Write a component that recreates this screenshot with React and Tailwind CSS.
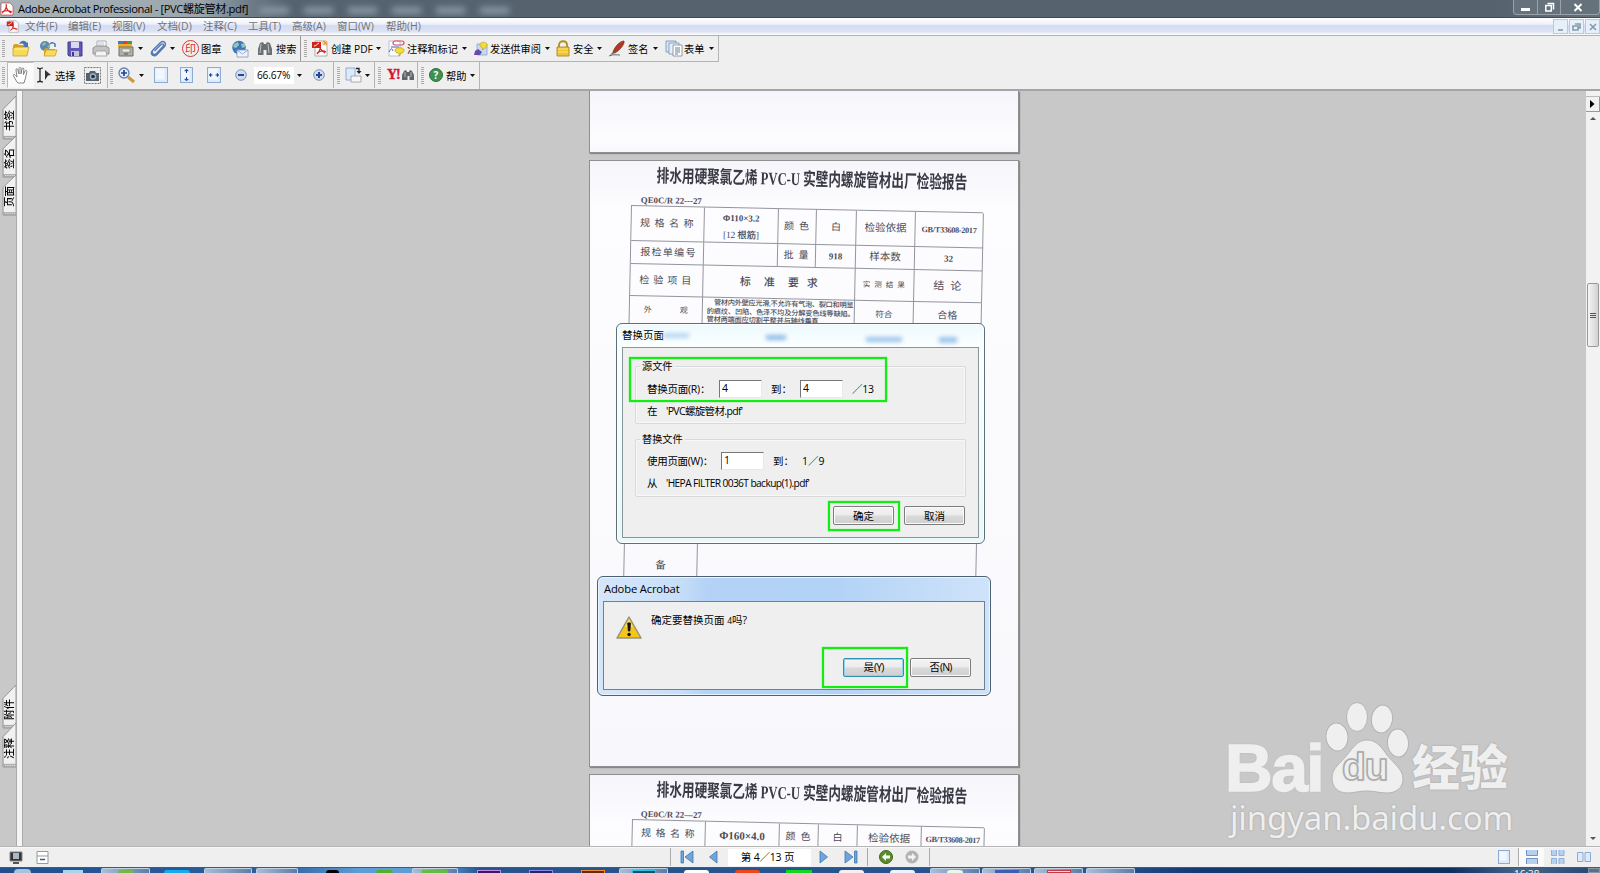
import React from 'react';

const UI = "font-['Open_Sans','Noto_Sans_CJK_SC',sans-serif]";

/* ---------- small building blocks ---------- */

const Svg = ({ w = 16, h = 16, children }) => (
    <svg width={w} height={h} viewBox={`0 0 ${w} ${h}`} className="shrink-0 overflow-visible">
        {children}
    </svg>
);

const Slot = ({ className, children }) => (
    <div className={`flex h-full shrink-0 items-center whitespace-nowrap ${className}`}>{children}</div>
);

const Grip = ({ className }) => (
    <Slot className={className}>
        <div className="h-[17px] w-[3px] bg-[repeating-linear-gradient(to_bottom,#aaa_0_1px,transparent_1px_2px)]"></div>
    </Slot>
);

const Caret = ({ className }) => (
    <Slot className={className}>
        <Svg w={5} h={3}><path d="M0 0h5L2.5 3z" fill="#111" /></Svg>
    </Slot>
);

/* ---------- toolbar icons ---------- */

const OpenIcon = () => (
    <Svg w={18} h={17}>
        <path d="M1 6l1-2h4l1 1h6v3H1z" fill="#d9a51f" />
        <path d="M1 16V8l3-1h13l-2 9z" fill="#f7da55" stroke="#c3951f" strokeWidth=".7" />
        <path d="M3 9h12" stroke="#fff3a8" />
        <path d="M7 4c2-4 6-4 8-1l1-1v5h-5l1.500-1.500C11 3 9 3 7 4z" fill="#4a76ad" />
    </Svg>
);

const WebFolderIcon = () => (
    <Svg w={18} h={17}>
        <circle cx="6" cy="6" r="5" fill="#5b87c0" />
        <path d="M3 4l3-2 1 2-3 2zM8 6l3-1-1 3z" fill="#8ecb7a" />
        <path d="M5 9l3-1 2 1h6v7H5z" fill="#d9a51f" />
        <path d="M5 16l2-6h11l-2 6z" fill="#f9dd59" stroke="#c3951f" strokeWidth=".7" />
        <path d="M11 4c2-2 4-1 5 0v3" stroke="#4a76ad" strokeWidth="1.500" fill="none" />
    </Svg>
);

const SaveIcon = () => (
    <Svg w={16} h={16}>
        <path d="M1 1h14v14H2l-1-1z" fill="#6058b8" stroke="#403a8c" />
        <path d="M4 1h8v6H4z" fill="#d8d8f0" />
        <path d="M4 10h8v5H4z" fill="#c4c4d4" />
        <path d="M5 11h2v4H5z" fill="#403a8c" />
    </Svg>
);

const PrintIcon = () => (
    <Svg w={18} h={17}>
        <path d="M5 1h9v8H5z" fill="#fff" stroke="#999" strokeWidth=".8" />
        <path d="M6 3h6M6 5h6" stroke="#b5c4dc" />
        <path d="M1 8l3-2h10l3 2v6H1z" fill="#c3c3c3" stroke="#858585" strokeWidth=".8" />
        <path d="M4 11h10l1 5H3z" fill="#f4f4f4" stroke="#999" strokeWidth=".8" />
    </Svg>
);

const OrganizerIcon = () => (
    <Svg w={18} h={17}>
        <path d="M1 1h5v3H1z" fill="#377fd0" />
        <path d="M6 1h4v3H6z" fill="#e43c2c" />
        <path d="M10 1h5v3h-5z" fill="#33a345" />
        <path d="M1 4h14v3H1z" fill="#f1ac28" />
        <path d="M2 7h14v9H2z" fill="#b0b0a8" stroke="#70706a" />
        <path d="M5 9h8v3H5z" fill="#f2f2ec" stroke="#777" strokeWidth=".6" />
        <path d="M7 14h4" stroke="#555" />
    </Svg>
);

const ClipIcon = () => (
    <Svg w={18} h={18}>
        <path d="M4.500 11L11 4.500c1.500-1.500 3.500.3 2 2L6.500 13.500c-2.500 2.500-6-.5-3.500-3.500L10.500 2.500c3-2.500 6.500.5 4 4L7 14.500c-3 3-7 0-5-3.500" fill="none" stroke="#5479b2" strokeWidth="1.400" />
    </Svg>
);

const StampIcon = () => (
    <div className="flex size-[17px] items-center justify-center rounded-full border border-[#e03030] text-[11px] leading-none text-[#e03030]">印</div>
);

const MailGlobeIcon = () => (
    <Svg w={18} h={18}>
        <circle cx="8" cy="7.500" r="6.800" fill="#3f76b4" />
        <path d="M3 4l4-2 1 3-3 3-3-1zM10 4l4-1v4l-3 1z" fill="#8fc5c0" />
        <path d="M6 10h11v7H6z" fill="#eef4fc" stroke="#7e98bf" strokeWidth=".8" />
        <path d="M6 10l5.500 4 5.500-4" fill="none" stroke="#7e98bf" strokeWidth=".8" />
    </Svg>
);

const BinocIcon = () => (
    <Svg w={16} h={16}>
        <path d="M3 2l3-1 1 2h2l1-2 3 1 2 6v6H9.500V9h-3v5H1V8z" fill="#6b6f73" />
        <path d="M4 3L3 12M11 3l1 9" stroke="#c2c6ca" />
    </Svg>
);

const PdfIcon = ({ s = 17, star }) => (
    <svg width={s} height={s} viewBox="0 0 17 17" className="shrink-0">
        <path d="M4 1h9l3 3v12H4z" fill="#fff" stroke="#999" strokeWidth=".8" />
        <path d="M1 2h9v6H1z" fill="#d3241c" />
        <path d="M6 14c3-3 4-7 3-9M6 13c3-2 6-3 9-1M9 8c1 2 3 4 5 5" stroke="#d3241c" fill="none" strokeWidth="1.200" />
        <path d="M3 6c2 0 3-2 5-3" stroke="#fff" fill="none" />
        {star && <path d="M14 0v6M11 3h6M12 1l4 4M16 1l-4 4" stroke="#f39a2c" strokeWidth="1" />}
    </svg>
);

const CommentIcon = () => (
    <Svg w={18} h={17}>
        <path d="M1 1h11v15H1z" fill="#fafcff" stroke="#9bb0d0" strokeWidth=".7" />
        <rect x="5" y="1" width="11" height="4" rx="2" fill="none" stroke="#e04858" strokeWidth="1.200" />
        <path d="M1 12c2-4 3-4 4-1M3 7h8" stroke="#3f65b5" fill="none" />
        <path d="M7 10c0-3 9-3 9 0 0 3-2 3-3 3l-2 3v-3c-3 0-4-1-4-3z" fill="#f5dc35" stroke="#b79a19" strokeWidth=".7" />
    </Svg>
);

const ReviewIcon = () => (
    <Svg w={15} h={16}>
        <path d="M3 3h10v11H3z" fill="#c5d9f2" stroke="#7f9dc8" strokeWidth=".7" />
        <path d="M6 3.500c0-3 7-3 7 0S11.500 7 10.500 7L8.500 9V7C6.500 6 6 5 6 3.500z" fill="#f3dc33" stroke="#b79a19" strokeWidth=".6" />
        <path d="M0 14l1-4 3-2 4 3-2 3z" fill="#6a4bab" />
    </Svg>
);

const LockIcon = () => (
    <Svg w={14} h={17}>
        <path d="M3 8V5c0-5 8-5 8 0v3" fill="none" stroke="#b28d24" strokeWidth="1.800" />
        <path d="M1 7h12v9H1z" fill="#f1c52e" stroke="#a87f14" strokeWidth=".8" />
        <path d="M2 9h10M2 12h10" stroke="#fbe489" />
    </Svg>
);

const PenIcon = () => (
    <Svg w={17} h={17}>
        <path d="M4 12C6 6 11 1 15 1c1 3-4 9-9 12z" fill="#b23a1e" stroke="#6f1c0c" strokeWidth=".6" />
        <path d="M1 15l3-3 2 1z" fill="#555" />
        <path d="M0 16c4-2 8-1 11-1" stroke="#444" fill="none" strokeWidth=".8" />
    </Svg>
);

const FormIcon = () => (
    <Svg w={18} h={17}>
        <path d="M1 1h10v11H1z" fill="#d6e4f6" stroke="#7290b8" strokeWidth=".8" />
        <path d="M4 3h10v11H4z" fill="#e6effa" stroke="#7290b8" strokeWidth=".8" />
        <path d="M8 5h9v11H8z" fill="#fff" stroke="#7b8694" strokeWidth=".8" />
        <path d="M10 8h5M10 10h5M10 12h5M10 14h3" stroke="#5f6d7c" strokeWidth=".9" />
    </Svg>
);

const HandIcon = () => (
    <Svg w={17} h={18}>
        <path d="M5 16L1.500 10c-.8-1.500 1-2 1.800-.8L5 11 4 4c-.2-1.600 1.500-1.700 1.800-.2L7 8V2.500C7 1 9 1 9 2.500V8l1-5c.3-1.500 2-1.200 1.800.3L11.500 8.500 13 5c.6-1.300 2.200-.7 1.800.8L13.500 12 12 17H6z" fill="#fff" stroke="#777" strokeWidth=".9" />
    </Svg>
);

const SelectIcon = () => (
    <Svg w={15} h={16}>
        <path d="M0 1c2 0 2 0 3 1 1-1 1-1 3-1M3 2v12M0 15c2 0 2 0 3-1 1 1 1 1 3 1" stroke="#222" fill="none" strokeWidth="1.200" />
        <path d="M8 3l6 5-3 .5L8 13z" fill="#333" />
    </Svg>
);

const CameraIcon = () => (
    <Svg w={17} h={17}>
        <path d="M.5.5h16v16H.5z" fill="none" stroke="#777" strokeDasharray="2 1" />
        <path d="M2 6h3l1-2h5l1 2h3v8H2z" fill="#55626f" />
        <circle cx="9" cy="9.500" r="3.200" fill="#9fb2c4" />
        <circle cx="9" cy="9.500" r="1.800" fill="#26303a" />
    </Svg>
);

const ZoomIcon = () => (
    <Svg w={17} h={17}>
        <path d="M10 10l6 5" stroke="#c79a3c" strokeWidth="3" />
        <circle cx="6" cy="6" r="5" fill="#e4eefb" stroke="#6482ae" strokeWidth="1.300" />
        <path d="M3 6h6M6 3v6" stroke="#22479a" strokeWidth="1.700" />
    </Svg>
);

const PageIcon = ({ children, w = 13, h = 16 }) => (
    <Svg w={w} h={h}>
        <rect x=".5" y=".5" width={w - 1} height={h - 1} fill="#dcebfb" stroke="#8fabd3" />
        <rect x="1.500" y="1.500" width={w - 5} height={h - 5} fill="#fff" opacity=".6" />
        {children}
    </Svg>
);

const RoundIcon = ({ plus }) => (
    <Svg w={12} h={12}>
        <circle cx="6" cy="6" r="5.300" fill="#cfdcf0" stroke="#7f93b8" />
        <path d={plus ? 'M3 6h6M6 3v6' : 'M3 6h6'} stroke="#24479a" strokeWidth="2" />
    </Svg>
);

const RotateIcon = () => (
    <Svg w={17} h={17}>
        <path d="M1 1h9v12H1z" fill="#dcebfb" stroke="#8fabd3" />
        <path d="M6 9h10v6H6z" fill="#f3f7fc" stroke="#999" strokeWidth=".8" />
        <path d="M11 1.500h3V4" stroke="#222" fill="none" strokeWidth="1.300" />
        <path d="M11.500 4h5L14 7z" fill="#222" />
    </Svg>
);

const HelpIcon = () => (
    <div className="flex size-[14px] items-center justify-center rounded-full border border-[#2f6f3c] bg-[#3f9150] text-[10px] font-bold leading-none text-white">?</div>
);

/* ---------- window chrome ---------- */

const TitleBar = () => (
    <div className="flex h-[18px] shrink-0 items-center overflow-hidden border-b border-[#414b54] bg-[linear-gradient(to_right,#a9b3ba_0,#9ba6ae_200px,#71808b_245px,#56636f_290px,#56636f_1500px,#66717b_100%)]">
        <div className="ml-px flex w-[17px]">
            <Svg w={12} h={14}>
                <path d="M0 1h9l3 3v9H0z" fill="#fff" stroke="#c9262b" strokeWidth=".6" />
                <path d="M1 11c4-3 5-7 4-9M1 10c4-2 7-2 10 0M5 5c1 3 3 5 5 6" stroke="#d3241c" fill="none" strokeWidth="1.200" />
            </Svg>
        </div>
        <div className="w-[242px] whitespace-nowrap text-[11.200px] leading-none tracking-[-.4px] text-black">Adobe Acrobat Professional - [PVC螺旋管材.pdf]</div>
        <div className="flex gap-[15px] pt-[4px] blur-[3px]">
            {[1, 2, 3, 4, 5, 6].map((k) => (
                <div key={k} className="h-[7px] w-[29px] bg-[#8796a5]"></div>
            ))}
        </div>
        <div className="ml-auto flex h-[15px] w-[87px] shrink-0 self-start overflow-hidden rounded-b border border-t-0 border-[#99a2aa] bg-[#65717b] text-white">
            <div className="flex w-[24px] items-center justify-center border-r border-[#99a2aa]">
                <div className="mt-1 h-[3px] w-[9px] bg-white"></div>
            </div>
            <div className="flex w-[23px] items-center justify-center border-r border-[#99a2aa]">
                <Svg w={9} h={9}><path d="M2.500.5h6v6M.8 2.500h5.500v5.500H.8z" stroke="#fff" strokeWidth="1.500" fill="none" /></Svg>
            </div>
            <div className="flex flex-1 items-center justify-center pr-[4px]">
                <Svg w={8} h={7}><path d="M.5 0l7 7M7.500 0l-7 7" stroke="#fff" strokeWidth="2" /></Svg>
            </div>
        </div>
    </div>
);

const MenuBar = () => (
    <div className="flex h-[18px] shrink-0 items-center border-b border-[#aeb2ba] bg-[linear-gradient(to_bottom,#fff_0,#eef1fa_35%,#d6dcf0_45%,#dde3f4_80%,#fff_100%)] text-[10.500px] leading-none text-[#6f7278]">
        <div className="ml-[6px] w-[19px]"><PdfIcon s={13} /></div>
        <Slot className="w-[43px]">文件(F)</Slot>
        <Slot className="w-[44px]">编辑(E)</Slot>
        <Slot className="w-[45px]">视图(V)</Slot>
        <Slot className="w-[46px]">文档(D)</Slot>
        <Slot className="w-[45px]">注释(C)</Slot>
        <Slot className="w-[44px]">工具(T)</Slot>
        <Slot className="w-[45px]">高级(A)</Slot>
        <Slot className="w-[49px]">窗口(W)</Slot>
        <Slot className="w-[43px]">帮助(H)</Slot>
        <div className="ml-auto flex gap-px">
            {['M4 9h5', 'M5 3h5v4H8M3 5h5v4H3z', 'M4 3l6 6M10 3L4 9'].map((d) => (
                <div key={d} className="flex h-[15px] w-[15px] items-center justify-center border border-[#b6cbdd] bg-[#e5f0fa]">
                    <Svg w={13} h={12}><path d={d} stroke="#8699aa" strokeWidth="1.600" fill="none" /></Svg>
                </div>
            ))}
        </div>
    </div>
);

const Toolbars = () => (
    <div className="h-[55px] shrink-0 border-b-2 border-[#a5a5a5] bg-[#efefef] text-[10.200px] leading-none text-black">
        <div className="flex h-[26px] w-[719px] border-b border-r border-[#b4b4b4]">
            <Grip className="w-[12px] pl-[2px]" />
            <Slot className="w-[27px]"><OpenIcon /></Slot>
            <Slot className="w-[28px]"><WebFolderIcon /></Slot>
            <Slot className="w-[25px]"><SaveIcon /></Slot>
            <Slot className="w-[25px]"><PrintIcon /></Slot>
            <Slot className="w-[21px]"><OrganizerIcon /></Slot>
            <Caret className="w-[12px]" />
            <Slot className="w-[20px]"><ClipIcon /></Slot>
            <Caret className="w-[12px]" />
            <Slot className="w-[19px]"><StampIcon /></Slot>
            <Slot className="w-[30px] pt-[2px]">图章</Slot>
            <Slot className="w-[26px]"><MailGlobeIcon /></Slot>
            <Slot className="w-[19px]"><BinocIcon /></Slot>
            <Slot className="w-[25px] border-r border-[#999] pt-[2px]">搜索</Slot>
            <Grip className="w-[10px] pl-[3px]" />
            <Slot className="w-[20px]"><PdfIcon star /></Slot>
            <Slot className="w-[45px] pt-[2px]">创建 PDF</Slot>
            <Caret className="w-[12px]" />
            <Slot className="w-[19px]"><CommentIcon /></Slot>
            <Slot className="w-[55px] pt-[2px]">注释和标记</Slot>
            <Caret className="w-[12px]" />
            <Slot className="w-[16px]"><ReviewIcon /></Slot>
            <Slot className="w-[55px] pt-[2px]">发送供审阅</Slot>
            <Caret className="w-[11px]" />
            <Slot className="w-[17px]"><LockIcon /></Slot>
            <Slot className="w-[24px] pt-[2px]">安全</Slot>
            <Caret className="w-[12px]" />
            <Slot className="w-[19px]"><PenIcon /></Slot>
            <Slot className="w-[25px] pt-[2px]">签名</Slot>
            <Caret className="w-[12px]" />
            <Slot className="w-[19px]"><FormIcon /></Slot>
            <Slot className="w-[25px] pt-[2px]">表单</Slot>
            <Caret className="w-[8px]" />
        </div>
        <div className="flex h-[27px] w-[480px] border-r border-[#b4b4b4] pb-px">
            <Grip className="w-[7px] pl-[2px]" />
            <Slot className="w-[27px] justify-center border border-b-[#f6f6f6] border-l-[#bbb] border-r-[#f6f6f6] border-t-[#bbb] bg-[#fafafa]"><HandIcon /></Slot>
            <Slot className="w-[21px] pl-[3px]"><SelectIcon /></Slot>
            <Slot className="w-[29px] pt-[2px]">选择</Slot>
            <Slot className="w-[24px] border-r border-[#b4b4b4]"><CameraIcon /></Slot>
            <Grip className="w-[10px] pl-[2px]" />
            <Slot className="w-[21px]"><ZoomIcon /></Slot>
            <Caret className="w-[15px]" />
            <Slot className="w-[26px]"><PageIcon w={14} /></Slot>
            <Slot className="w-[27px]"><PageIcon><path d="M4.500 4h4L6.500 2zM4.500 12h4l-2 2z" fill="#22479a" stroke="#22479a" strokeWidth=".4" /><path d="M6.500 4v2M6.500 10v2" stroke="#22479a" /></PageIcon></Slot>
            <Slot className="w-[28px]"><PageIcon w={14}><path d="M4 6v4L2 8zM10 6v4l2-2z" fill="#22479a" stroke="#22479a" strokeWidth=".4" /><path d="M4 8h1.500M8.500 8H10" stroke="#22479a" /></PageIcon></Slot>
            <Slot className="w-[19px]"><RoundIcon /></Slot>
            <Slot className="w-[43px]"><div className="flex h-[17px] w-[40px] items-center bg-white pl-[3px] tracking-[-.2px]">66.67%</div></Slot>
            <Caret className="w-[16px]" />
            <Slot className="w-[21px] border-r border-[#b4b4b4]"><RoundIcon plus /></Slot>
            <Grip className="w-[11px] pl-[3px]" />
            <Slot className="w-[20px]"><RotateIcon /></Slot>
            <Caret className="w-[10px] border-r border-[#b4b4b4]" />
            <Grip className="w-[12px] pl-[3px]" />
            <Slot className="w-[31px] border-r border-[#b4b4b4]">
                <span className="w-[15px] font-['Liberation_Serif'] text-[14px] font-black tracking-[-1px] text-[#d8142c] [-webkit-text-stroke:.4px_#d8142c]">Y!</span>
                <Svg w={12} h={12}>
                    <path d="M2 2l2-1 1 2h2l1-2 2 1 2 4v5H7.500V7h-2v4H0V6z" fill="#5f6569" />
                    <path d="M3 3v5M9 3v5" stroke="#b5babd" />
                </Svg>
            </Slot>
            <Grip className="w-[11px] pl-[3px]" />
            <Slot className="w-[17px]"><HelpIcon /></Slot>
            <Slot className="w-[24px] pt-[2px]">帮助</Slot>
            <Caret className="w-[8px]" />
        </div>
    </div>
);

const SideTab = ({ label, className }) => (
    <div className={`relative flex shrink-0 items-end justify-center ${className}`}>
        <svg className="absolute left-0 top-0 h-full w-full" viewBox="0 0 13 44" preserveAspectRatio="none">
            <path d="M13 1L1 14v29h12z" fill="#f1f1f1" stroke="#888" strokeWidth=".8" />
            <path d="M1 40h12v3H1z" fill="#a8a8a8" />
            <path d="M3 41.500h9" stroke="#eee" strokeDasharray="1 1" />
        </svg>
        <span className="relative mb-[9px] rotate-180 text-[10.500px] font-medium leading-none text-black [text-orientation:sideways] [writing-mode:vertical-rl]">{label}</span>
    </div>
);

const SidePanel = () => (
    <div className="flex w-[17px] shrink-0 flex-col border-r border-[#aaa] bg-[#c8c8c8] pb-[78px] pl-[2px] pt-[4px]">
        <SideTab label="书签" className="h-[45px] w-[14px]" />
        <SideTab label="签名" className="-mt-[5px] h-[43px] w-[14px]" />
        <SideTab label="页面" className="-mt-[4px] h-[42px] w-[14px]" />
        <SideTab label="附件" className="mt-auto h-[45px] w-[14px]" />
        <SideTab label="注释" className="-mt-[7px] h-[46px] w-[14px]" />
    </div>
);

/* ---------- scanned pages ---------- */

const Cell = ({ className = '', children }) => (
    <div className={`flex items-center justify-center whitespace-nowrap border-b border-r border-[#94949e] ${className}`}>{children}</div>
);

const ReportHead = ({ code }) => (
    <>
        <div className="ml-[67px] w-[320px] origin-top-left rotate-[1.250deg] pt-[4px]">
            <div className="w-max origin-left scale-x-[.701] text-[18px] font-semibold leading-[22px] text-[#3a3a45]">
                排水用硬聚氯乙烯 PVC-U 实壁内螺旋管材出厂检验报告
            </div>
        </div>
        <div className="ml-[51px] mt-[7px] h-[12px] origin-top-left rotate-1 text-[8.800px] font-bold leading-[12px]">{code}</div>
    </>
);

const Page = ({ className, children }) => (
    <div className={`w-[430px] shrink-0 overflow-hidden border border-[#8f8f8f] bg-[#fafafd] bg-[linear-gradient(to_bottom,#f5f5fb_0,#fdfdff_50px,#f8f8fc_100%)] font-['Liberation_Serif','Noto_Sans_CJK_SC',serif] text-[#4c4c58] shadow-[1px_1px_1px_#888] ${className}`}>
        {children}
    </div>
);

const CurrentPage = () => (
    <Page className="h-[607px]">
        <ReportHead code="QE0C/R 22---27" />
        <div className="-mt-px ml-[41px] grid w-[352px] origin-top-left rotate-[1.200deg] grid-cols-[73px_74px_38px_40px_59px_68px] grid-rows-[35px_23px_32px_40px_194px_74px] border-l border-t border-[#94949e] text-[10px] leading-none">
            <Cell className="pl-[3px] tracking-[4.500px]">规格名称</Cell>
            <Cell className="flex-col gap-[8px] pt-1 text-[9px]">
                <b>Φ110×3.2</b>
                <span className="text-[9.500px] font-medium tracking-tight">[12 根筋]</span>
            </Cell>
            <Cell className="pl-[4px] tracking-[5px]">颜色</Cell>
            <Cell>白</Cell>
            <Cell className="text-[10.500px]">检验依据</Cell>
            <Cell className="pt-[2px] text-[8.200px] font-bold tracking-[-.3px]">GB/T33608-2017</Cell>
            <Cell className="pl-[3px] tracking-[1.300px]">报检单编号</Cell>
            <Cell />
            <Cell className="pl-[4px] tracking-[5px]">批量</Cell>
            <Cell className="text-[9px] font-bold">918</Cell>
            <Cell className="text-[10.500px]">样本数</Cell>
            <Cell className="text-[9px] font-bold">32</Cell>
            <Cell className="pl-[2px] tracking-[4px]">检验项目</Cell>
            <Cell className="col-span-3 gap-[13px] text-[11px] font-medium"><span>标</span><span>准</span><span>要</span><span className="-ml-[5px]">求</span></Cell>
            <Cell className="pl-[3px] text-[7.500px] tracking-[4px]">实测结果</Cell>
            <Cell className="pl-[5px] text-[11px] tracking-[6px]">结论</Cell>
            <Cell className="items-start gap-[28px] pt-[10px] text-[8px]"><span>外</span><span>观</span></Cell>
            <Cell className="col-span-3 flex-col !items-start !justify-start pl-[4px] pt-px text-[7.200px] font-medium leading-[8.700px]">
                <span className="pl-[7px] tracking-[-.3px]">管材内外壁应光滑,不允许有气泡、裂口和明显</span>
                <span className="tracking-[-.15px]">的痕纹、凹陷、色泽不均及分解变色线等缺陷。</span>
                <span className="tracking-[-.2px]">管材两端面应切割平整并与轴线垂直</span>
            </Cell>
            <Cell className="items-start pt-[9px] text-[8.500px]">符合</Cell>
            <Cell className="items-start pt-[8px]">合格</Cell>
            <Cell />
            <Cell className="col-span-5" />
            <Cell className="pb-[3px] text-[10.500px]">备</Cell>
            <Cell className="col-span-5" />
        </div>
    </Page>
);

const NextPage = () => (
    <Page className="h-[120px]">
        <ReportHead code="QE0C/R 22—27" />
        <div className="-mt-px ml-[42px] grid w-[352px] origin-top-left rotate-[1.350deg] grid-cols-[73px_74px_39px_39px_64px_63px] grid-rows-[27px_30px] border-l border-t border-[#94949e] text-[10px] leading-none">
            <Cell className="pl-[3px] tracking-[4.500px]">规格名称</Cell>
            <Cell className="text-[11px] font-bold">Φ160×4.0</Cell>
            <Cell className="pl-[4px] tracking-[5px]">颜色</Cell>
            <Cell>白</Cell>
            <Cell className="text-[10.500px]">检验依据</Cell>
            <Cell className="text-[8.200px] font-bold tracking-[-.35px]">GB/T33608-2017</Cell>
            <Cell className="col-span-6" />
        </div>
    </Page>
);

/* ---------- dialogs ---------- */

const Button = ({ focus, className = '', children }) => (
    <div className={`flex h-[19px] w-[61px] shrink-0 items-center justify-center rounded-[2px] border bg-[linear-gradient(to_bottom,#f4f4f4_0,#ececec_48%,#dadada_52%,#cfcfcf_100%)] text-[10.500px] leading-none text-black ${focus ? 'border-[#2f8fb8] shadow-[inset_0_0_0_1px_#8fd4ee]' : 'border-[#7d7d7d] shadow-[inset_0_0_0_1px_#fafafa]'} ${className}`}>
        {children}
    </div>
);

const Field = ({ children }) => (
    <div className="flex h-[18px] w-[43px] shrink-0 items-center border border-b-[#e9e9e9] border-l-[#777] border-r-[#e9e9e9] border-t-[#777] bg-white pb-px pl-[2px]">{children}</div>
);

const GroupBox = ({ title, className = '', children }) => (
    <div className={`relative h-[58px] w-[331px] rounded-[2px] border border-[#d7d9db] shadow-[inset_0_0_0_1px_#f8f8f8] ${className}`}>
        <span className="absolute -top-[7px] left-[4px] bg-[#efefef] px-[2px] text-[10.200px] leading-[13px]">{title}</span>
        {children}
    </div>
);

const Highlight = ({ className }) => <div className={`absolute border-2 border-[#12ee12] shadow-[0_0_1px_#12ee12,inset_0_0_1px_#12ee12] ${className}`}></div>;

const ReplaceDialog = () => (
    <div className="absolute left-[616px] top-[323px] h-[221px] w-[369px] rounded-[6px] border border-[#5c6f78] bg-[linear-gradient(to_bottom,#eefafe_0,#fbffff_24px,#e9f8fb_100%)] px-[5px] text-[10.500px] leading-none text-black shadow-[inset_0_0_0_1px_#fff]">
        <div className="flex h-[23px] items-center">
            <span className="w-[41px] whitespace-nowrap">替换页面</span>
            <span className="h-[5px] w-[26px] bg-[#b7d8f3] blur-[2px]"></span>
            <span className="ml-[77px] mt-[3px] h-[5px] w-[20px] bg-[#8dbae8] blur-[2px]"></span>
            <span className="ml-[80px] mt-[8px] h-[5px] w-[36px] bg-[#9cc4ec] blur-[2px]"></span>
            <span className="ml-[37px] mt-[9px] h-[6px] w-[18px] bg-[#9cc4ec] blur-[2px]"></span>
        </div>
        <div className="h-[191px] w-[357px] border border-[#889599] bg-[#efefef] pl-[12px] pt-[18px]">
            <GroupBox title="源文件">
                <div className="mt-[13px] flex h-[18px] items-center whitespace-nowrap pl-[11px]">
                    <span className="w-[72px] tracking-[-.25px]">替换页面(R)：</span>
                    <Field>4</Field>
                    <span className="ml-[9px] w-[29px]">到：</span>
                    <Field>4</Field>
                    <span className="ml-[9px] tracking-[-.3px]">／13</span>
                </div>
                <div className="mt-[6px] flex pl-[11px] leading-[14px]">
                    <span className="w-[19px]">在</span>
                    <span className="tracking-[-.65px]">'PVC螺旋管材.pdf'</span>
                </div>
            </GroupBox>
            <GroupBox title="替换文件" className="mt-[15px]">
                <div className="mt-[12px] flex h-[18px] items-center whitespace-nowrap pl-[11px]">
                    <span className="w-[74px] tracking-[-.3px]">使用页面(W)：</span>
                    <Field>1</Field>
                    <span className="ml-[9px] w-[29px]">到：</span>
                    <span>1／9</span>
                </div>
                <div className="mt-[6px] flex pl-[11px] leading-[14px]">
                    <span className="w-[19px]">从</span>
                    <span className="whitespace-nowrap text-[10.200px] tracking-[-.6px]">'HEPA FILTER 0036T backup(1).pdf'</span>
                </div>
            </GroupBox>
            <div className="ml-[198px] mt-[9px] flex gap-[10px]">
                <Button className="pt-px">确定</Button>
                <Button className="pt-px">取消</Button>
            </div>
        </div>
    </div>
);

const ConfirmDialog = () => (
    <div className="absolute left-[597px] top-[576px] h-[120px] w-[394px] rounded-[6px] border border-[#4d6172] bg-[linear-gradient(to_right,#d5e6fa_0,#c9dff8_20%,#b4d2f6_28%,#b2d2f6_60%,#bfdaf7_78%,#cfe3fa_100%)] px-[5px] text-black shadow-[inset_0_0_0_1px_#e8f4ff]">
        <div className="flex h-[24px] items-center pl-px text-[11.200px] leading-none tracking-[-.15px]">Adobe Acrobat</div>
        <div className="h-[89px] w-[382px] border border-[#6c8196] bg-[#efefef] text-[10.500px] leading-none">
            <div className="flex h-[56px] pl-[12px] pt-[11px]">
                <Svg w={26} h={25}>
                    <path d="M13 4L25 25H1z" fill="#f4c51c" stroke="#9a9278" strokeWidth="1.500" strokeLinejoin="round" />
                    <path d="M13 6l4 8H9z" fill="#fbe26a" />
                    <path d="M11.800 10h2.600l-.6 8h-1.400z" fill="#111" stroke="#111" />
                    <circle cx="13.100" cy="21.500" r="1.700" fill="#111" />
                </Svg>
                <span className="ml-[9px] mt-[2px] whitespace-nowrap">确定要替换页面 <span className="text-[8.500px]">4</span>吗?</span>
            </div>
            <div className="ml-[239px] flex gap-[6px]">
                <Button focus>是<span className="tracking-[-.9px]">(Y)</span></Button>
                <Button>否<span className="tracking-[-.9px]">(N)</span></Button>
            </div>
        </div>
    </div>
);

/* ---------- right edge, status bar, taskbar ---------- */

const ScrollBar = () => (
    <div className="flex w-[14px] shrink-0 flex-col items-center bg-[#f2f2f2]">
        <div className="h-[6px] w-full border-b border-[#bbb]"></div>
        <div className="flex h-[15px] w-full items-center justify-center border-b border-r border-[#999]">
            <Svg w={5} h={8}><path d="M0 0l4.500 4L0 8z" fill="#000" /></Svg>
        </div>
        <div className="mt-[5px]"><Svg w={6} h={3}><path d="M0 3h6L3 0z" fill="#555" /></Svg></div>
        <div className="mt-[163px] flex h-[64px] w-[12px] flex-col items-center justify-center gap-px rounded-[2px] border border-[#999] bg-[linear-gradient(to_right,#f5f5f5,#d2d2d6)]">
            <div className="h-px w-[6px] bg-[#555]"></div>
            <div className="h-px w-[6px] bg-[#555]"></div>
            <div className="h-px w-[6px] bg-[#555]"></div>
        </div>
        <div className="mb-[6px] mt-auto"><Svg w={6} h={3}><path d="M0 0h6L3 3z" fill="#555" /></Svg></div>
    </div>
);

const Nav = ({ d }) => (
    <Svg w={15} h={14}><path d={d} fill="#6fa5d8" stroke="#3f76b4" strokeWidth=".8" /></Svg>
);

const StatusBar = () => (
    <div className="flex h-[20px] shrink-0 items-center border-t border-[#f8f8f8] bg-[#efefef] pb-px text-[10.500px] leading-none text-black">
        <Slot className="w-[36px] pl-[9px]">
            <Svg w={14} h={13}><path d="M1 1h12v9H1z" fill="#333" stroke="#888" /><path d="M4 2h6v6H4z" fill="#a9b8c8" /><path d="M4 12h6" stroke="#555" strokeWidth="2" /></Svg>
        </Slot>
        <Slot className="w-[634px]">
            <Svg w={13} h={13}><path d="M1 .5h11v12H1z" fill="#fff" stroke="#999" /><path d="M1 5h11" stroke="#999" /><path d="M4 8.500h5" stroke="#345a9c" strokeWidth="1.500" /></Svg>
        </Slot>
        <Slot className="w-[39px] border-l border-[#aaa] pl-[9px]"><Nav d="M1 1h2.500v12H1zM13 1v12L5 7z" /></Slot>
        <Slot className="w-[19px]"><Nav d="M8 1v12L.5 7z" /></Slot>
        <div className="flex h-[17px] w-[83px] items-center justify-center whitespace-nowrap bg-white pr-[4px] tracking-[-.2px]">第 4／13 页</div>
        <Slot className="w-[33px] pl-[8px]"><Nav d="M1 1v12l7.500-6z" /></Slot>
        <Slot className="w-[23px]"><Nav d="M1 1v12l8-6zM10.500 1H13v12h-2.500z" /></Slot>
        <Slot className="w-[38px] border-l border-[#aaa] pl-[11px]">
            <Svg w={14} h={14}><circle cx="7" cy="7" r="6.500" fill="#5a8c2c" stroke="#3f6a1c" /><path d="M3 7l4-4v2.500h4v3H7V11z" fill="#fff" /></Svg>
        </Slot>
        <Slot className="w-[25px] border-r border-[#aaa]">
            <Svg w={14} h={14}><circle cx="7" cy="7" r="6.500" fill="#b3b3b3" /><path d="M11 7L7 3v2.500H3v3h4V11z" fill="#f4f4f4" /></Svg>
        </Slot>
        <Slot className="ml-auto w-[20px]"><PageIcon w={12} h={14} /></Slot>
        <Slot className="mr-[7px] w-[26px] justify-center border-l border-[#aaa] bg-[#fbfbfb]">
            <Svg w={12} h={14}><path d="M.5 0v5.500h11V0M.5 14V8.500h11V14" fill="#b7d0ee" stroke="#6e93c6" /></Svg>
        </Slot>
        <Slot className="w-[26px]">
            <Svg w={13} h={14}><path d="M.5 0v5.500h5V0M8 0v5.500h5V0M.5 14V8.500h5V14M8 14V8.500h5V14" fill="#b7d0ee" stroke="#8fb0da" /></Svg>
        </Slot>
        <Slot className="w-[23px]">
            <Svg w={14} h={12}><path d="M.5 1.500h5.500v9H.5zM8 1.500h5.500v9H8z" fill="#dcebfb" stroke="#8fabd3" /></Svg>
        </Slot>
    </div>
);

const TaskButton = ({ className, children }) => (
    <div className={`flex h-[5px] shrink-0 items-end justify-center rounded-t-[2px] border border-b-0 border-[#c1d0e2] bg-[linear-gradient(to_right,#a9bed6,#5b7da6)] ${className}`}>{children}</div>
);

const TaskBar = () => (
    <div className="flex flex-1 items-end overflow-hidden border-t border-[#41597a] bg-[linear-gradient(to_right,#21508c_0,#2b5f9f_280px,#5d9ed8_360px,#5d9ed8_440px,#28548d_480px,#28548d_1100px,#123a72_1200px,#0d2e60_1450px,#48658a_1520px,#24466f_100%)]">
        <div className="ml-[14px] h-[4px] w-[17px] shrink-0 rounded-t-full bg-[#a9c3da]"></div>
        <div className="ml-[32px] h-[3px] w-[20px] shrink-0 bg-[#a9d5ee]"></div>
        <TaskButton className="ml-[18px] w-[49px]"><div className="h-[3px] w-[16px] rounded-t-full bg-[#74b64c]"></div></TaskButton>
        <div className="ml-[14px] h-[3px] w-[26px] shrink-0 rounded-t bg-[#12adf0]"></div>
        <TaskButton className="ml-[14px] w-[48px]" />
        <TaskButton className="ml-[4px] w-[42px]" />
        <div className="ml-[28px] h-[3px] w-[13px] shrink-0 rounded-t-full bg-black"></div>
        <div className="ml-[37px] h-[3px] w-[17px] shrink-0 rounded-t-full bg-[#53ae2c]"></div>
        <TaskButton className="ml-[19px] w-[46px]"><div className="h-[3px] w-[26px] bg-[#67b94a]"></div></TaskButton>
        <div className="ml-[19px] h-[3px] w-[24px] shrink-0 border border-b-0 border-[#c18bea] bg-[#3b1760]"></div>
        <div className="ml-[28px] h-[3px] w-[24px] shrink-0 border border-b-0 border-[#8d87f0] bg-[#27275f]"></div>
        <div className="ml-[28px] h-[3px] w-[24px] shrink-0 border border-b-0 border-[#f28a2c] bg-[#5c2d10]"></div>
        <TaskButton className="ml-[14px] w-[49px]"><div className="h-[3px] w-[24px] border border-b-0 border-[#24c4e8] bg-[#0d4e62]"></div></TaskButton>
        <div className="ml-[16px] h-[3px] w-[25px] shrink-0 rounded-t bg-white"></div>
        <div className="ml-[26px] h-[3px] w-[25px] shrink-0 rounded-t bg-[#f0461c]"></div>
        <div className="ml-[26px] h-[3px] w-[26px] shrink-0 bg-[#10d820]"></div>
        <div className="ml-[27px] h-[3px] w-[25px] shrink-0 rounded-t bg-[#fbeef2]"></div>
        <div className="ml-[26px] h-[3px] w-[25px] shrink-0 rounded-t bg-[#eef4fb]"></div>
        <TaskButton className="ml-[15px] w-[50px]"><div className="h-[3px] w-[16px] rounded-t-full bg-[#eef6ea]"></div></TaskButton>
        <TaskButton className="ml-[2px] w-[49px]"><div className="h-[3px] w-[24px] bg-[#3e5fb0]"></div></TaskButton>
        <TaskButton className="ml-[3px] w-[49px]"><div className="h-[3px] w-[24px] border border-[#c33c4c] bg-[#dfe4ee]"></div></TaskButton>
        <TaskButton className="ml-[3px] w-[49px]" />
        <div className="ml-auto h-[3px] w-[74px] shrink-0 text-[10px] leading-[9px] text-white">16:38</div>
        <div className="h-[5px] w-[12px] shrink-0 border border-[#8795a5] bg-[#5b6f86]"></div>
    </div>
);

const Watermark = () => (
    <div className="absolute left-[1229px] top-[700px] w-[290px] text-[#efefef] [text-shadow:0_0_2px_#999]">
        <div className="flex h-[94px] items-end">
            <div className="-mb-[6px] -ml-[4px] h-[60px] w-[105px] whitespace-nowrap font-['Liberation_Sans',sans-serif] text-[66px] font-bold leading-[56px] tracking-[-1.500px] [-webkit-text-stroke:1.500px_#efefef]">Bai</div>
            <div className="relative h-[94px] w-[83px] shrink-0">
                <svg className="absolute left-[-5px] top-0" width="86" height="94" viewBox="0 0 86 94">
                    <g fill="#efefef" stroke="#b4b4b4" strokeWidth="1">
                        <ellipse cx="12" cy="37" rx="11" ry="14" transform="rotate(-6 12 37)" />
                        <ellipse cx="32" cy="17" rx="10.500" ry="14.500" />
                        <ellipse cx="57" cy="19" rx="10.500" ry="14" transform="rotate(8 57 19)" />
                        <ellipse cx="73" cy="43" rx="10.500" ry="14" transform="rotate(-4 73 43)" />
                        <path d="M42 40c10 0 15 8 20 15 6 8 16 14 16 24 0 9-7 14-16 14-7 0-13-2-20-2s-14 2-20 2C13 93 7 87 7 78c0-10 8-14 15-23 6-7 10-15 20-15z" />
                    </g>
                </svg>
                <span className="absolute left-[12px] top-[42px] font-['Liberation_Sans',sans-serif] text-[39px] font-bold leading-[50px] tracking-[-1px] text-[#efefef] [-webkit-text-stroke:1.500px_#aaa]">du</span>
            </div>
            <div className="-mb-px ml-[-1px] whitespace-nowrap text-[48px] font-black leading-[57px]">经验</div>
        </div>
        <div className="mt-[7px] whitespace-nowrap pl-px font-['Noto_Sans',sans-serif] text-[33px] leading-[34px] tracking-[-.15px]">jingyan.baidu.com</div>
    </div>
);

export default function App() {
    return (
        <div className={`relative flex h-[873px] w-[1600px] flex-col overflow-hidden bg-[#efefef] ${UI}`}>
            <TitleBar />
            <MenuBar />
            <Toolbars />
            <div className="flex h-[756px] shrink-0 border-b border-[#b5b5b5]">
                <SidePanel />
                <div className="w-[5px] shrink-0 bg-[#f5f5f5]"></div>
                <div className="flex flex-1 flex-col gap-[7px] overflow-hidden border-l border-[#aaa] bg-[#c8c8c8] pl-[566px]">
                    <Page className="h-[62px] border-t-0" />
                    <CurrentPage />
                    <NextPage />
                </div>
                <ScrollBar />
            </div>
            <StatusBar />
            <TaskBar />

            <ReplaceDialog />
            <ConfirmDialog />
            <Highlight className="left-[629px] top-[357px] h-[45px] w-[258px]" />
            <Highlight className="left-[828px] top-[501px] h-[30px] w-[72px]" />
            <Highlight className="left-[822px] top-[647px] h-[41px] w-[86px]" />
            <Watermark />
        </div>
    );
}
